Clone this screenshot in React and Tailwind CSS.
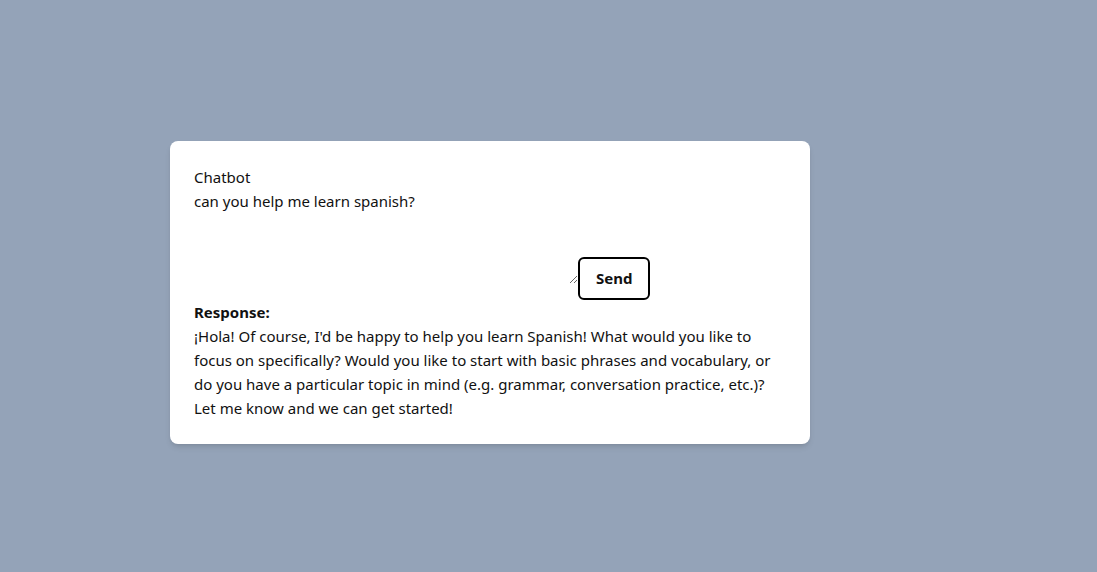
import React, { useState } from "react";

export default function App() {
  const [prompt, setPrompt] = useState("can you help me learn spanish?");
  const response =
    "¡Hola! Of course, I'd be happy to help you learn Spanish! What would you like to focus on specifically? Would you like to start with basic phrases and vocabulary, or do you have a particular topic in mind (e.g. grammar, conversation practice, etc.)? Let me know and we can get started!";

  return (
    <div
      className="min-h-screen w-full bg-[#94a3b8] pl-[170px] pt-[141px] text-[#111] text-[15px] leading-6"
      style={{ fontFamily: '"Noto Sans", "Open Sans", sans-serif' }}
    >
      {/* Card */}
      <div className="w-[640px] rounded-lg bg-white p-6 shadow-md">
        <div>Chatbot</div>

        {/* Prompt + send */}
        <div>
          <textarea
            className="w-[384px] h-[95px] resize-y border-0 p-0 align-baseline leading-6 outline-none"
            value={prompt}
            onChange={(e) => setPrompt(e.target.value)}
          />
          <button className="rounded-md border-2 border-black bg-white px-4 py-[7.5px] font-bold leading-6">
            Send
          </button>
        </div>

        {/* Response */}
        <div className="font-bold">Response:</div>
        <p>{response}</p>
      </div>
    </div>
  );
}
